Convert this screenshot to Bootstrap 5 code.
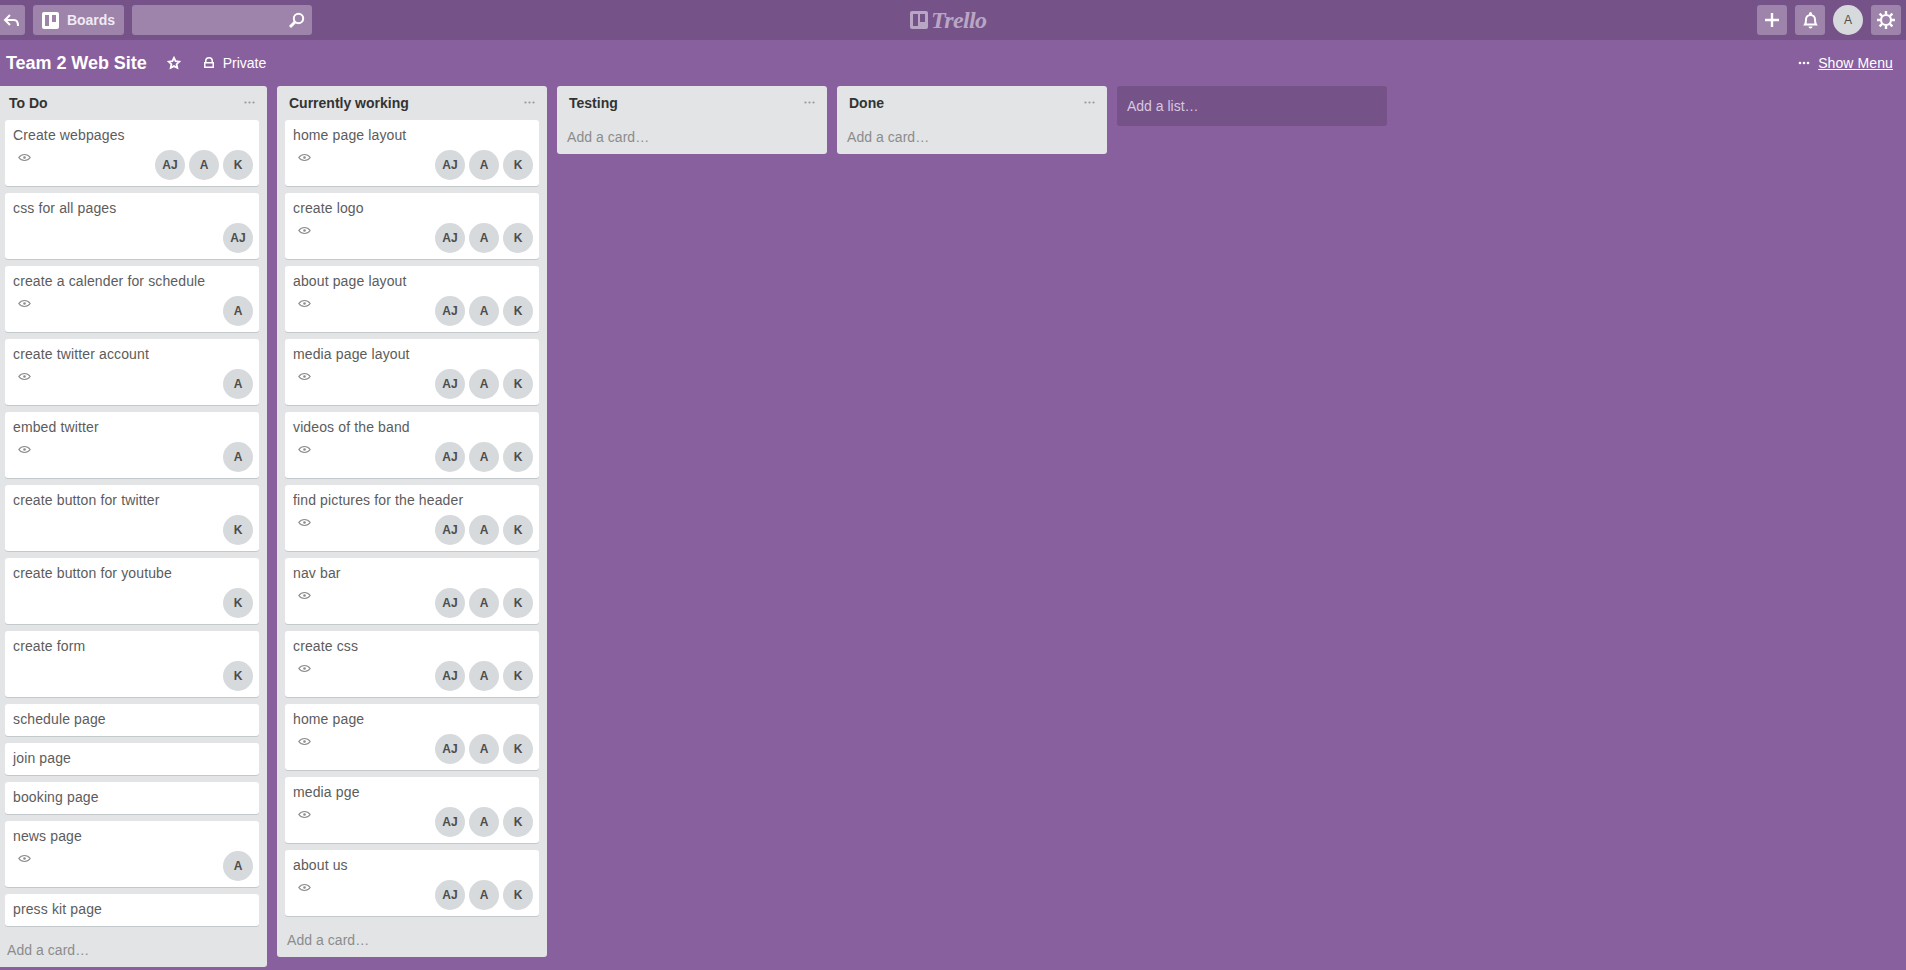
<!DOCTYPE html>
<html lang="en">
<head>
    <meta charset="UTF-8">
    <meta name="viewport" content="width=device-width, initial-scale=1.0">
    <title>Team 2 Web Site on Trello</title>
    <link rel="stylesheet" href="https://cdn.jsdelivr.net/npm/bootstrap@5.3.0/dist/css/bootstrap.min.css">
    <style>
        html, body { height: 100%; overflow: hidden; }
        body { background: #89609e; font-family: "Liberation Sans", Arial, sans-serif; font-size: 14px; line-height: 18px; color: #5c5c5c; }
        .top-bar { height: 40px; background: #755287; padding: 5px 5px 5px 0; }
        .top-btn { height: 30px; background: #9e83ab; border-radius: 3px; color: #fff; font-weight: 700; font-size: 14px; }
        .btn-back { width: 30px; margin-left: -5px; padding-left: 3px; margin-right: 8px; }
        .btn-boards { width: 91px; margin-right: 8px; color: #f0ebf3; }
        .btn-search { width: 180px; padding-right: 7px; }
        .btn-square { width: 30px; margin-left: 8px; }
        .top-avatar { width: 30px; height: 30px; margin-left: 8px; border-radius: 50%; background: #d6dadc; color: #4d4d4d; font-size: 12px; }
        .logo-box { left: 910px; top: 10px; color: #b9a6c5; }
        .logo-word { font-family: "Liberation Serif", serif; font-style: italic; font-weight: 700; font-size: 24px; line-height: 20px; letter-spacing: -.6px; margin-left: 3px; }
        .board-bar { height: 46px; padding: 0 13px 0 6px; color: #fff; }
        .board-title { font-size: 18px; font-weight: 700; margin-right: 20px; letter-spacing: -.05px; }
        .star-icon { margin-right: 22px; }
        .show-menu { color: #fff; text-decoration: underline; letter-spacing: .1px; }
        .lists { margin-left: -3px; gap: 10px; }
        .list-col { width: 270px; flex: none; background: #e2e4e6; border-radius: 3px; }
        .list-head { height: 34px; padding: 8px 12px 0 12px; color: #333; font-weight: 700; }
        .list-dots { margin-top: 7px; }
        .list-cards { padding: 0 8px; }
        .list-foot { height: 34px; padding: 8px 10px; color: #8c8c8c; letter-spacing: .05px; }
        .task { background: #fff; border-radius: 3px; box-shadow: 0 1px 0 #c4c9cc; margin-bottom: 7px; padding: 6px 6px 6px 8px; }
        .task-name { margin-bottom: 2px; letter-spacing: .13px; }
        .task-row { margin-top: 6px; }
        .task-eye { margin: 3px 0 0 5px; }
        .member { width: 30px; height: 30px; margin-left: 4px; border-radius: 50%; background: #d6dadc; color: #4d4d4d; font-size: 12px; font-weight: 700; }
        .add-list { width: 270px; height: 40px; flex: none; padding: 11px 10px; background: #755287; border-radius: 3px; color: #d8c8e0; }
    </style>
</head>
<body>
    <div class="top-bar d-flex align-items-center position-relative">
        <div class="top-btn btn-back d-flex align-items-center justify-content-center">
            <svg width="17" height="15" viewBox="0 0 17 15" fill="none" stroke="#fff" stroke-width="2"><path d="M7 2 2 7l5 5M2 7h9c3 0 4 2 4 6"/></svg>
        </div>
        <div class="top-btn btn-boards d-flex align-items-center justify-content-center gap-2">
            <svg width="17" height="17" viewBox="0 0 17 17"><path fill="#fff" fill-rule="evenodd" d="M2 0h13a2 2 0 0 1 2 2v13a2 2 0 0 1-2 2H2a2 2 0 0 1-2-2V2a2 2 0 0 1 2-2Zm1 3v11h4V3Zm7 0v7h4V3Z"/></svg>
            <span>Boards</span>
        </div>
        <div class="top-btn btn-search d-flex align-items-center justify-content-end">
            <svg width="17" height="17" viewBox="0 0 17 17" fill="none" stroke="#fff"><circle cx="10.500" cy="6.500" r="4.700" stroke-width="2"/><path stroke-width="3" d="M7 10 2 15"/></svg>
        </div>
        <div class="logo-box position-absolute d-flex align-items-center">
            <svg width="18" height="18" viewBox="0 0 18 18"><path fill="#b9a6c5" fill-rule="evenodd" d="M2 0h14a2 2 0 0 1 2 2v14a2 2 0 0 1-2 2H2a2 2 0 0 1-2-2V2a2 2 0 0 1 2-2Zm1 3v12h5V3Zm7 0v8h5V3Z"/></svg>
            <span class="logo-word">Trello</span>
        </div>
        <div class="ms-auto d-flex align-items-center">
            <div class="top-btn btn-square d-flex align-items-center justify-content-center">
                <svg width="16" height="16" viewBox="0 0 16 16"><path fill="none" stroke="#fff" stroke-width="2.400" d="M8 1v14M1 8h14"/></svg>
            </div>
            <div class="top-btn btn-square d-flex align-items-center justify-content-center">
                <svg width="17" height="17" viewBox="0 0 17 17" fill="#fff"><path fill="none" stroke="#fff" stroke-width="2" d="M3 12.500c1-1.500 1-3 1-5 0-2.500 2-4.500 4.500-4.500S13 5 13 7.500c0 2 0 3.500 1 5Z"/><path d="M7 1.500a1.500 1.500 0 0 1 3 0V3H7ZM6.500 14.500h4a2 2 0 0 1-4 0Z"/></svg>
            </div>
            <div class="top-avatar d-flex align-items-center justify-content-center">A</div>
            <div class="top-btn btn-square d-flex align-items-center justify-content-center">
                <svg width="20" height="20" viewBox="0 0 20 20" fill="none" stroke="#fff"><circle cx="10" cy="10" r="5" stroke-width="2.200"/><path stroke-width="2.400" d="M10 1v3.500M10 15.500V19M1 10h3.500M15.500 10H19M3.600 3.600l2.500 2.500M13.900 13.900l2.500 2.500M3.600 16.400l2.500-2.500M13.900 6.100l2.500-2.500"/></svg>
            </div>
        </div>
    </div>

    <div class="board-bar d-flex align-items-center">
        <span class="board-title">Team 2 Web Site</span>
        <svg class="star-icon" width="14" height="14" viewBox="0 0 14 14"><path fill="none" stroke="#fff" stroke-width="1.800" d="m7 1.800 1.600 3.400 3.700.5-2.700 2.500.7 3.700L7 10.100l-3.300 1.800.7-3.700-2.700-2.500 3.700-.5Z"/></svg>
        <svg class="me-2" width="12" height="12" viewBox="0 0 12 12"><path fill="#fff" fill-rule="evenodd" d="M1 5h1V4a4 4 0 0 1 8 0v1h1v6H1Zm2.500 0h5V4a2.500 2.500 0 0 0-5 0Zm-1 1.500v3h7v-3Z"/></svg>
        <span>Private</span>
        <div class="ms-auto d-flex align-items-center">
            <svg class="me-2" width="12" height="4" viewBox="0 0 12 4" fill="#fff"><circle cx="2" cy="2" r="1.300"/><circle cx="6" cy="2" r="1.300"/><circle cx="10" cy="2" r="1.300"/></svg>
            <a class="show-menu" href="#">Show Menu</a>
        </div>
    </div>

    <div class="lists d-flex align-items-start" id="board"></div>

    <script>
    document.addEventListener("DOMContentLoaded", () => {
        const allThree = ["AJ", "A", "K"];
        const lists = [
            { name: "To Do", cards: [
                ["Create webpages", allThree],
                ["css for all pages", ["AJ"], true],
                ["create a calender for schedule", ["A"]],
                ["create twitter account", ["A"]],
                ["embed twitter", ["A"]],
                ["create button for twitter", ["K"], true],
                ["create button for youtube", ["K"], true],
                ["create form", ["K"], true],
                ["schedule page"],
                ["join page"],
                ["booking page"],
                ["news page", ["A"]],
                ["press kit page"]
            ]},
            { name: "Currently working", cards: [
                "home page layout", "create logo", "about page layout", "media page layout",
                "videos of the band", "find pictures for the header", "nav bar", "create css",
                "home page", "media pge", "about us"
            ].map(name => [name, allThree]) },
            { name: "Testing", cards: [] },
            { name: "Done", cards: [] }
        ];
        const eye = `<svg class="task-eye" width="13" height="9" viewBox="0 0 13 9" fill="none" stroke="#8c8c8c" stroke-width="1.200"><path d="M.8 4.500C3.800.5 9.200.5 12.200 4.500 9.200 8.500 3.800 8.500.8 4.500Z"/><circle cx="6.500" cy="4.500" r="1.300" fill="#8c8c8c" stroke="none"/></svg>`;

        function cardHtml([name, members, noEye]) {
            if (!members) return `<div class="task"><div class="task-name">${name}</div></div>`;
            const faces = members.map(m => `<div class="member d-flex align-items-center justify-content-center">${m}</div>`).join("");
            return `<div class="task">
                <div class="task-name">${name}</div>
                <div class="task-row d-flex justify-content-between align-items-start">
                    ${noEye ? "<span></span>" : eye}
                    <div class="d-flex">${faces}</div>
                </div>
            </div>`;
        }

        const dots = `<svg class="list-dots" width="11" height="3" viewBox="0 0 11 3" fill="#999"><circle cx="1.500" cy="1.500" r="1.100"/><circle cx="5.500" cy="1.500" r="1.100"/><circle cx="9.500" cy="1.500" r="1.100"/></svg>`;
        document.getElementById("board").innerHTML = lists.map(list => `
            <div class="list-col">
                <div class="list-head d-flex justify-content-between"><span>${list.name}</span>${dots}</div>
                <div class="list-cards">${list.cards.map(cardHtml).join("")}</div>
                <div class="list-foot">Add a card…</div>
            </div>
        `).join("") + `<div class="add-list">Add a list…</div>`;
    });
    </script>
    <script src="https://cdn.jsdelivr.net/npm/bootstrap@5.3.0/dist/js/bootstrap.bundle.min.js"></script>
</body>
</html>
